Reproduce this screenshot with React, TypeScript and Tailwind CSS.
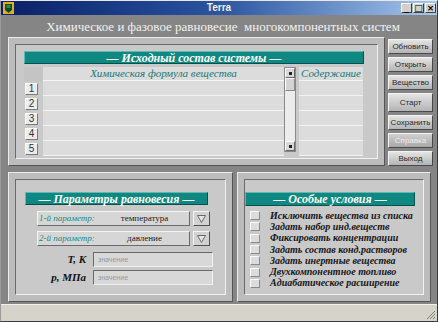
import React from "react";

const serif = "font-['Liberation_Serif',serif]";

function TealBar({ children, className = "" }: { children: React.ReactNode; className?: string }) {
  return (
    <div
      className={`h-[13px] bg-[#0e8880] border-t border-l border-[#5fb8b2] border-b border-r border-b-[#05504b] border-r-[#05504b] flex items-center justify-center text-white italic font-bold text-[12px] leading-none ${serif} ${className}`}
    >
      {children}
    </div>
  );
}

function Btn({ label, h = "h-[15px]", disabled = false }: { label: string; h?: string; disabled?: boolean }) {
  return (
    <div
      className={`w-[45px] ${h} bg-gradient-to-b ${
        disabled ? "from-[#d0d0d0] to-[#a8a8a8] text-[#ececec]" : "from-[#e4e4e4] to-[#b4b4b4] text-[#2a2a2a]"
      } border border-t-[#f4f4f4] border-l-[#f4f4f4] border-b-[#4a4a4a] border-r-[#4a4a4a] flex items-center justify-center text-[8px] leading-none font-['Liberation_Sans',sans-serif]`}
    >
      {label}
    </div>
  );
}

function Raised({ className = "", children }: { className?: string; children: React.ReactNode }) {
  return (
    <div className={`border border-t-[#ececec] border-l-[#ececec] border-b-[#555] border-r-[#555] ${className}`}>
      {children}
    </div>
  );
}

function Sunken({ className = "", children }: { className?: string; children?: React.ReactNode }) {
  return (
    <div className={`border border-t-[#6a6a6a] border-l-[#6a6a6a] border-b-[#f2f2f2] border-r-[#f2f2f2] ${className}`}>
      {children}
    </div>
  );
}

function DropBtn() {
  return (
    <div className="w-[17px] h-[15px] bg-[#d2d2d2] border border-t-[#f4f4f4] border-l-[#f4f4f4] border-b-[#505050] border-r-[#505050] flex items-center justify-center">
      <svg width="9" height="8" viewBox="0 0 9 8">
        <path d="M0.5 0.5 H8.5 L4.5 7.5 Z" fill="#e4e4e4" stroke="#6a6a6a" strokeWidth="1" />
      </svg>
    </div>
  );
}

export default function App() {
  const rows = [1, 2, 3, 4, 5];
  const conds = [
    "Исключить вещества из списка",
    "Задать набор инд.веществ",
    "Фиксировать концентрации",
    "Задать состав конд.растворов",
    "Задать инертные вещества",
    "Двухкомпонентное топливо",
    "Адиабатическое расширение",
  ];
  return (
    <div className="w-[438px] h-[322px] overflow-hidden bg-[#858585] flex flex-col border border-t-[#e8e8e8] border-l-[#9a9a9a] border-r-[#3a3a3a] border-b-[#3a3a3a]">
      {/* Title bar */}
      <div className="h-[14px] bg-gradient-to-r from-[#0a1f68] via-[#2c54a0] to-[#a8c8ec] flex items-center relative shrink-0">
        <div className="absolute left-[2px] top-[1px]">
          <svg width="11" height="12" viewBox="0 0 11 12">
            <rect x="0" y="0" width="11" height="12" fill="#e0b020" />
            <path d="M2 2 H9 V8 L5.5 11 L2 8 Z" fill="#0b4a2a" />
            <rect x="3.5" y="3" width="4" height="3" fill="#2a8a4a" />
          </svg>
        </div>
        <div className="flex-1 text-center text-[#f0f0f0] font-bold text-[10px] leading-none font-['Liberation_Sans',sans-serif]">
          Terra
        </div>
        <div className="absolute right-[1px] top-[2px] flex gap-[1px]">
          {["_", "□", "×"].map((g, i) => (
            <div
              key={i}
              className="w-[11px] h-[10px] bg-[#d4d0c8] border border-t-[#fff] border-l-[#fff] border-b-[#404040] border-r-[#404040] flex items-center justify-center text-[9px] leading-none font-bold text-black font-['DejaVu_Sans',sans-serif]"
            >
              {g}
            </div>
          ))}
        </div>
      </div>

      {/* Heading */}
      <div className={`h-[22px] shrink-0 flex items-center justify-center text-[#f2f2f2] text-[13px] leading-none ${serif} pl-[8px]`}>
        Химическое и фазовое равновесие&nbsp; многокомпонентных систем
      </div>

      {/* Body */}
      <div className="flex-1 flex flex-col pl-[7px]">
        {/* Top row */}
        <div className="flex gap-[3px] h-[130px]">
          <Raised className="w-[377px] h-[129px] bg-[#bcbcbc] p-[6px]">
            <Sunken className="w-full h-full bg-[#c9c9c9] pt-[6px] pl-[8px]">
              <TealBar className="w-[340px]">— Исходный состав системы —</TealBar>
              <div className="flex mt-[3px]">
                {/* left: number + formula */}
                <div className="flex flex-col w-[260px]">
                  <div className="flex h-[14px]">
                    <div className="w-[19px] bg-[#c4c4c4]" />
                    <div className={`flex-1 bg-[#dcdcdc] border-b border-[#f4f4f4] flex items-center justify-center text-[#117a78] italic text-[11px] leading-none ${serif}`}>
                      Химическая формула вещества
                    </div>
                  </div>
                  {rows.map((r) => (
                    <div key={r} className="flex h-[15px]">
                      <div className="w-[19px] flex items-center pl-[1px]">
                        <div className="w-[13px] h-[12px] bg-[#ececec] border border-t-[#ffffff] border-l-[#ffffff] border-b-[#7a7a7a] border-r-[#7a7a7a] flex items-center justify-center text-[10px] leading-none text-[#333] font-['Liberation_Sans',sans-serif]">
                          {r}
                        </div>
                      </div>
                      <div className="flex-1 bg-[#dcdcdc] border-b border-[#f2f2f2]" />
                    </div>
                  ))}
                </div>
                {/* scrollbar */}
                <div className="w-[12px] h-[85px] bg-[#ececec] border border-[#8a8a8a] flex flex-col">
                  <div className="h-[10px] bg-[#d8d8d8] border border-t-[#fff] border-l-[#fff] border-b-[#666] border-r-[#666] flex items-center justify-center">
                    <div className="w-[3px] h-[3px] bg-[#222]" />
                  </div>
                  <div className="h-[13px] bg-[#d4d4d4] border border-t-[#fff] border-l-[#fff] border-b-[#888] border-r-[#888]" />
                  <div className="flex-1" />
                  <div className="h-[10px] bg-[#d8d8d8] border border-t-[#fff] border-l-[#fff] border-b-[#666] border-r-[#666] flex items-center justify-center">
                    <div className="w-[3px] h-[3px] bg-[#222]" />
                  </div>
                </div>
                {/* content column */}
                <div className="flex flex-col w-[64px] ml-[3px]">
                  <div className={`h-[14px] bg-[#dcdcdc] border-b border-[#f4f4f4] flex items-center justify-center text-[#117a78] italic text-[11px] leading-none ${serif}`}>
                    Содержание
                  </div>
                  {rows.map((r) => (
                    <div key={r} className="h-[15px] bg-[#dcdcdc] border-b border-[#f2f2f2]" />
                  ))}
                </div>
              </div>
            </Sunken>
          </Raised>

          {/* Buttons column */}
          <div className="flex flex-col gap-[3px] pt-[2px]">
            <Btn label="Обновить" />
            <Btn label="Открыть" />
            <Btn label="Вещество" />
            <Btn label="Старт" h="h-[19px]" />
            <Btn label="Сохранить" />
            <Btn label="Справка" disabled />
            <Btn label="Выход" />
          </div>
        </div>

        {/* Bottom row */}
        <div className="flex gap-[4px] mt-[5px] h-[130px]">
          <Raised className="w-[225px] h-full bg-[#bcbcbc] p-[6px]">
            <Sunken className="w-full h-full bg-[#c9c9c9] pt-[12px] pl-[9px]">
              <TealBar className="w-[183px]">— Параметры равновесия —</TealBar>
              <div className="flex flex-col pl-[12px] mt-[6px]">
                {[
                  ["1-й параметр:", "температура"],
                  ["2-й параметр:", "давление"],
                ].map(([l, v], i) => (
                  <div key={i} className={`flex gap-[3px] ${i === 1 ? "mt-[5px]" : ""}`}>
                    <div className="w-[153px] h-[15px] bg-[#d6d6d6] border border-t-[#f4f4f4] border-l-[#f4f4f4] border-b-[#6a6a6a] border-r-[#6a6a6a] flex items-center">
                      <span className={`w-[62px] pl-[1px] whitespace-nowrap text-[#1a8a84] italic text-[9px] leading-none ${serif}`}>{l}</span>
                      <span className={`flex-1 text-center text-[#1a1a1a] text-[9px] leading-none ${serif}`}>{v}</span>
                    </div>
                    <DropBtn />
                  </div>
                ))}
                {[
                  ["T, K"],
                  ["p, МПа"],
                ].map(([l], i) => (
                  <div key={i} className={`flex items-center ${i === 0 ? "mt-[6px]" : "mt-[3px]"}`}>
                    <span className={`w-[49px] text-right text-[#111] italic font-bold text-[11px] leading-none ${serif}`}>{l}</span>
                    <Sunken className="ml-[7px] w-[120px] h-[15px] bg-[#d8d8d8] flex items-center pl-[4px]">
                      <span className="text-[7px] leading-none text-[#9a9a9a] font-['Liberation_Sans',sans-serif]">значение</span>
                    </Sunken>
                  </div>
                ))}
              </div>
            </Sunken>
          </Raised>

          <Raised className="w-[194px] h-full bg-[#bcbcbc] p-[6px]">
            <Sunken className="w-full h-full bg-[#c9c9c9] pt-[12px]">
              <TealBar className="w-[170px] h-[14px]">— Особые условия —</TealBar>
              <div className="flex flex-col mt-[4px] pl-[5px]">
                {conds.map((c) => (
                  <div key={c} className="h-[11.3px] flex items-center">
                    <div className="w-[10px] h-[9px] bg-[#dcdcdc] border border-t-[#fafafa] border-l-[#fafafa] border-b-[#8a8a8a] border-r-[#8a8a8a]" />
                    <span className={`ml-[10px] text-[#161616] italic font-bold text-[10px] leading-none whitespace-nowrap ${serif}`}>{c}</span>
                  </div>
                ))}
              </div>
            </Sunken>
          </Raised>
        </div>
      </div>

      {/* Status bar */}
      <div className="h-[17px] shrink-0 bg-[#d6d3cb] border-t border-[#f0f0f0] relative">
        <svg className="absolute right-[1px] bottom-[1px]" width="10" height="10" viewBox="0 0 10 10">
          <path d="M9 1 L1 9 M9 4 L4 9 M9 7 L7 9" stroke="#808080" strokeWidth="1" />
        </svg>
      </div>
    </div>
  );
}
